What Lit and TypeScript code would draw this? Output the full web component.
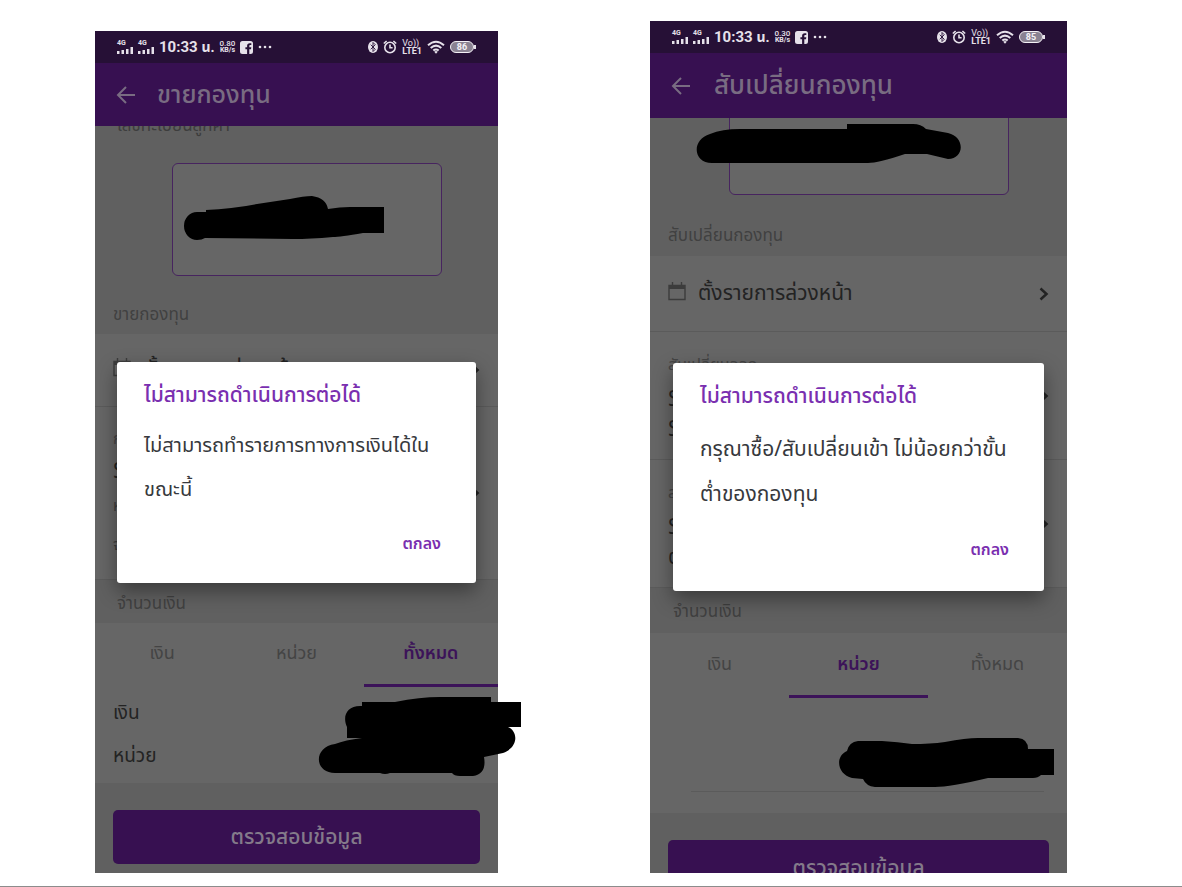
import { LitElement, html, css, svg, nothing } from "lit";
import { customElement, property } from "lit/decorators.js";
import { classMap } from "lit/directives/class-map.js";

interface Line {
  text: string;
  kind: "label" | "value" | "note";
}

interface Row {
  schedule?: boolean;
  lines: Line[];
}

interface Screen {
  id: string;
  title: string;
  speed: string;
  battery: string;
  clippedLabel?: string;
  rows: Row[];
  activeTab: string;
  totals: string[];
  message: string;
  viewBox: string;
  strokes: string[];
}

const TABS = ["เงิน", "หน่วย", "ทั้งหมด"];

const SELL: Screen = {
  id: "sell",
  title: "ขายกองทุน",
  speed: "0.80",
  battery: "86",
  clippedLabel: "เลขทะเบียนลูกค้า",
  rows: [
    { schedule: true, lines: [{ text: "ตั้งรายการล่วงหน้า", kind: "value" }] },
    {
      lines: [
        { text: "ก", kind: "label" },
        { text: "S", kind: "value" },
        { text: "ห", kind: "note" },
        { text: "จ", kind: "note" },
      ],
    },
  ],
  activeTab: "ทั้งหมด",
  totals: ["เงิน", "หน่วย"],
  message: "ไม่สามารถทำรายการทางการเงินได้ใน\nขณะนี้",
  viewBox: "95 31 403 842",
  strokes: [
    "M206 212V210Q232 209 257 204L290 199Q304 196 312 196Q326 198 328 209Q340 207 350 207H384V233H363Q340 237 333 237Q310 239 293 239L205 238Q202 240 197 240A13 14 0 0 1 197 212Z",
    "M362 702H395Q420 697 440 697H491V702H521V727H508C518 731 519 747 503 753L484 757Q487 774 473 776H460Q454 776 452 773H390Q385 775 380 773H335C314 773 313 747 335 744Q345 740 362 738H347V727C342 716 347 705 362 706Z",
  ],
};

const SWITCH: Screen = {
  id: "switch",
  title: "สับเปลี่ยนกองทุน",
  speed: "0.30",
  battery: "85",
  rows: [
    { schedule: true, lines: [{ text: "ตั้งรายการล่วงหน้า", kind: "value" }] },
    {
      lines: [
        { text: "สับเปลี่ยนออก", kind: "label" },
        { text: "S", kind: "value" },
        { text: "S", kind: "value" },
      ],
    },
    {
      lines: [
        { text: "ส", kind: "label" },
        { text: "S", kind: "value" },
        { text: "ต", kind: "value" },
      ],
    },
  ],
  activeTab: "หน่วย",
  totals: [],
  message: "กรุณาซื้อ/สับเปลี่ยนเข้า ไม่น้อยกว่าขั้น\nต่ำของกองทุน",
  viewBox: "650 21 417 852",
  strokes: [
    "M740 129H847V124H913Q921 124 926 129L948 133C965 137 965 158 948 159L927 154H905Q878 163 868 163H712C693 163 691 140 710 134Q722 129 740 129Z",
    "M858 741H882Q898 742 912 744Q930 744 945 742Q966 738 978 738H1018Q1028 739 1028 749H1054V775H1041Q1038 778 1033 778H988Q950 787 935 787H875Q866 786 863 779L852 778C838 775 834 757 847 751Q849 742 858 741Z",
  ],
};

@customElement("status-bar")
class StatusBar extends LitElement {
  @property() speed = "";
  @property() battery = "";

  static styles = css`
    :host {
      display: flex;
      align-items: center;
      justify-content: space-between;
      height: 32px;
      padding: 0 22px;
      background: #261036;
      color: #e6e1ea;
      font-family: Roboto, "Noto Sans Thai", sans-serif;
    }
    .group {
      display: flex;
      align-items: center;
      gap: 5px;
    }
    svg {
      display: block;
      fill: currentColor;
      flex: none;
    }
    .cell {
      display: grid;
      font-size: 7px;
      line-height: 6px;
      font-weight: 700;
    }
    .time {
      font-size: 15px;
      font-weight: 700;
      white-space: nowrap;
    }
    .thai {
      font-size: 14px;
    }
    .tiny {
      font-size: 8px;
      line-height: 7px;
      font-weight: 500;
      text-align: center;
    }
    .unit {
      display: block;
      font-size: 7px;
      font-weight: 700;
    }
    .lte {
      font-size: 9px;
      line-height: 8px;
    }
    .lte b {
      display: block;
    }
    .battery {
      box-sizing: border-box;
      width: 24px;
      height: 12px;
      border: 1px solid currentColor;
      border-radius: 6px;
      background: #8a8292;
      font-size: 9px;
      line-height: 10px;
      font-weight: 700;
      text-align: center;
      color: #f4f1f6;
    }
    .power {
      display: flex;
      align-items: center;
    }
    .power::after {
      content: "";
      width: 2px;
      height: 4px;
      background: currentColor;
    }
  `;

  render() {
    const bars = html`<span class="cell">4G
      <svg width="16" height="8" viewBox="0 0 16 8">
        <path d="M0 5h2.500v3H0zM4.500 4H7v4H4.500zM9 3h2.500v5H9zM13.500 1H16v7h-2.500z" />
      </svg></span>`;
    return html`
      <div class="group">
        ${bars}${bars}
        <span class="time">10:33 <span class="thai">น.</span></span>
        <span class="tiny">${this.speed}<span class="unit">KB/s</span></span>
        <svg width="13" height="13" viewBox="0 0 13 13">
          <path fill-rule="evenodd" d="M2.500 0h8A2.500 2.500 0 0 1 13 2.500v8a2.500 2.500 0 0 1-2.500 2.500H9.300V8.200h1.700l.3-2H9.300V5c0-.7.3-1 1-1h1V2.200H9.800C8 2.200 7.100 3.200 7.100 4.800v1.400H5.400v2h1.700V13H2.500A2.500 2.500 0 0 1 0 10.500v-8A2.500 2.500 0 0 1 2.500 0z" />
        </svg>
        <svg width="14" height="4" viewBox="0 0 14 4">
          <circle cx="2" cy="2" r="1.300" /><circle cx="7" cy="2" r="1.300" /><circle cx="12" cy="2" r="1.300" />
        </svg>
      </div>
      <div class="group">
        <svg width="10" height="14" viewBox="0 0 11 14">
          <ellipse cx="5.500" cy="7" rx="5.500" ry="6.700" />
          <path d="M3 4.500l5 5L5.500 12V2L8 4.500l-5 5" fill="none" stroke="#261036" />
        </svg>
        <svg width="14" height="14" viewBox="0 0 14 14">
          <g fill="none" stroke="currentColor" stroke-width="1.600">
            <circle cx="7" cy="7.500" r="5.200" />
            <path d="M7 4.500v3.300h2.600M.8 3.500L3.600 1M13.200 3.500L10.400 1" />
          </g>
        </svg>
        <span class="lte">Vo))<b>LTE1</b></span>
        <svg width="18" height="14" viewBox="0 0 18 14">
          <path d="M1 5.200Q9-1.800 17 5.200M3.700 8Q9 3.300 14.300 8M6.300 10.600Q9 8.300 11.700 10.600" fill="none" stroke="currentColor" stroke-width="2" />
          <path d="M7.200 11.800Q9 10.400 10.800 11.800L9 13.800z" />
        </svg>
        <span class="power"><span class="battery">${this.battery}</span></span>
      </div>
    `;
  }
}

@customElement("fund-screen")
class FundScreen extends LitElement {
  @property({ attribute: false }) screen!: Screen;

  static styles = css`
    :host {
      display: flex;
      flex-direction: column;
      position: relative;
      min-width: 0;
      min-height: 0;
      color: #232323;
    }
    .bar {
      flex: none;
      display: flex;
      align-items: center;
      gap: 20px;
      height: 63px;
      padding: 0 20px;
      background: #371051;
      color: #796c82;
    }
    .bar.switch {
      gap: 22px;
      height: 65px;
    }
    button {
      font: inherit;
      color: inherit;
      border: 0;
      padding: 0;
      background: none;
    }
    svg {
      display: block;
      flex: none;
    }
    h1,
    h2,
    h3,
    p {
      margin: 0;
      font-weight: 400;
    }
    h1 {
      font-size: 25px;
      line-height: 40px;
      font-weight: 500;
      white-space: nowrap;
    }
    .switch h1 {
      font-size: 26px;
    }
    .body {
      flex: 1;
      min-height: 0;
      overflow: hidden;
      background: #606060;
    }
    .account {
      display: flow-root;
    }
    .clipped {
      margin-top: -14px;
      padding-left: 22px;
      font-size: 17px;
      line-height: 28px;
      color: #3d3d3d;
    }
    .card {
      box-sizing: border-box;
      width: 67%;
      height: 113px;
      margin: 23px auto 0 19%;
      border: 1px solid #47245f;
      border-radius: 6px;
      background: #666;
    }
    .switch .card {
      height: 118px;
      margin-top: -41px;
    }
    .section {
      padding: 24px 18px 4px;
      font-size: 17px;
      line-height: 30px;
      color: #414141;
    }
    .switch .section {
      padding: 26px 18px 5px;
    }
    .row {
      box-sizing: border-box;
      display: flex;
      align-items: center;
      justify-content: space-between;
      min-height: 73px;
      padding: 0 16px 0 18px;
      background: #666;
      border-bottom: 1px solid #5b5b5b;
    }
    .switch .row {
      min-height: 76px;
    }
    .lines {
      padding: 14px 0;
    }
    .label {
      font-size: 16px;
      line-height: 36px;
      color: #444;
    }
    .value {
      font-size: 21px;
      line-height: 30px;
    }
    .note {
      font-size: 15px;
      line-height: 39px;
      color: #3d3d3d;
    }
    .switch .label {
      line-height: 39px;
    }
    .schedule {
      display: flex;
      align-items: center;
      gap: 12px;
    }
    .section.amount {
      padding: 9px 22px 4px;
    }
    .switch .section.amount {
      padding: 9px 23px 6px;
    }
    .tabs {
      display: grid;
      grid-template-columns: repeat(3, 1fr);
      background: #666;
    }
    .tab {
      height: 64px;
      border-bottom: 3px solid transparent;
      font-size: 18px;
      color: #444;
    }
    .switch .tab {
      height: 65px;
    }
    .tab.active {
      color: #3c1359;
      border-color: #3c1359;
      font-weight: 600;
    }
    .details {
      background: #666;
    }
    .totals {
      margin: 0;
      padding: 5px 18px 5px;
      font-size: 19px;
      line-height: 43px;
    }
    .entry {
      display: flow-root;
      padding: 0 23px 21px 41px;
    }
    input {
      box-sizing: border-box;
      display: block;
      width: 100%;
      height: 94px;
      border: 0;
      border-bottom: 1px solid #5b5b5b;
      background: none;
      font: inherit;
    }
    .submit {
      display: block;
      width: calc(100% - 36px);
      margin: 27px 18px;
      height: 54px;
      border-radius: 5px;
      background: #371051;
      color: #847a8a;
      font-size: 21px;
      font-weight: 500;
    }
    .switch .submit {
      height: 56px;
    }
    .dialog {
      box-sizing: border-box;
      position: absolute;
      top: 331px;
      left: 22px;
      right: 22px;
      padding: 12px 35px 17px 27px;
      background: #fff;
      border-radius: 3px;
      box-shadow: 0 8px 20px rgba(0, 0, 0, 0.4);
      color: #37393d;
    }
    .switch .dialog {
      top: 342px;
      left: 23px;
      right: 23px;
      padding-bottom: 19px;
    }
    h2 {
      font-size: 21px;
      line-height: 44px;
      font-weight: 500;
      color: #7a2fb0;
    }
    .message {
      padding-top: 6px;
      font-size: 20px;
      line-height: 44px;
      white-space: pre;
    }
    .switch .message {
      padding-top: 8px;
      font-size: 21px;
      line-height: 45px;
    }
    .actions {
      display: flex;
      justify-content: flex-end;
      padding-top: 10px;
      font-size: 16px;
      line-height: 44px;
      font-weight: 600;
      color: #7a2fb0;
    }
    .switch .actions {
      padding-top: 11px;
    }
    .ink {
      position: absolute;
      top: 0;
      left: 0;
      width: 100%;
      height: auto;
      overflow: visible;
      pointer-events: none;
    }
  `;

  private row(row: Row) {
    const chevron = html`<svg width="14" height="16" viewBox="0 0 14 16">
      <path d="M3.500 2.500L9.500 8l-6 5.500" fill="none" stroke="#232323" stroke-width="2.500" />
    </svg>`;
    if (row.schedule) {
      return html`<div class="row">
        <div class="schedule">
          <svg width="18" height="24" viewBox="0 0 18 24">
            <path d="M1 3.500h16v14H1zM4.500 0v4M13.500 0v4" fill="none" stroke="#3c3c3c" stroke-width="1.400" />
            <path d="M1 3.500h16v3.500H1z" fill="#3c3c3c" />
          </svg>
          <span class="value">${row.lines[0].text}</span>
        </div>
        ${chevron}
      </div>`;
    }
    return html`<div class="row">
      <div class="lines">
        ${row.lines.map((l) => html`<div class=${l.kind}>${l.text}</div>`)}
      </div>
      ${chevron}
    </div>`;
  }

  render() {
    const s = this.screen;
    return html`
      <status-bar speed=${s.speed} battery=${s.battery}></status-bar>
      <div class=${"bar " + s.id}>
        <button aria-label="ย้อนกลับ">
          <svg width="22" height="22" viewBox="0 0 22 22">
            <path d="M20 11H3M11 3L3 11l8 8" fill="none" stroke="currentColor" stroke-width="2" />
          </svg>
        </button>
        <h1>${s.title}</h1>
      </div>
      <div class=${"body " + s.id}>
        <div class="account">
          ${s.clippedLabel ? html`<div class="clipped">${s.clippedLabel}</div>` : nothing}
          <div class="card"></div>
        </div>
        <h3 class="section">${s.title}</h3>
        ${s.rows.map((r) => this.row(r))}
        <h3 class="section amount">จำนวนเงิน</h3>
        <div class="tabs" role="tablist">
          ${TABS.map(
            (t) => html`<button
              role="tab"
              aria-selected=${t === s.activeTab}
              class=${classMap({ tab: true, active: t === s.activeTab })}
            >${t}</button>`
          )}
        </div>
        <div class="details">
          ${s.totals.length
            ? html`<div class="totals">${s.totals.map((t) => html`<div>${t}</div>`)}</div>`
            : html`<div class="entry"><input type="text" aria-label=${s.activeTab} /></div>`}
        </div>
        <button class="submit">ตรวจสอบข้อมูล</button>
      </div>
      <div class=${s.id}>
        <section class="dialog" role="alertdialog" aria-labelledby="dialog-title">
          <h2 id="dialog-title">ไม่สามารถดำเนินการต่อได้</h2>
          <p class="message">${s.message}</p>
          <div class="actions"><button>ตกลง</button></div>
        </section>
      </div>
      <svg class="ink" viewBox=${s.viewBox} aria-hidden="true">
        ${s.strokes.map((d) => svg`<path d=${d} fill="#000"/>`)}
      </svg>
    `;
  }
}

@customElement("app-root")
class AppRoot extends LitElement {
  static styles = css`
    :host {
      box-sizing: border-box;
      display: grid;
      grid-template-columns: 403fr 417fr;
      grid-template-rows: minmax(0, 1fr);
      column-gap: 152px;
      height: 100vh;
      padding: 21px 115px 13px 95px;
      border-bottom: 1px solid #8c8c8c;
      background: #fff;
      font-family: "Noto Sans Thai", "Sarabun", "Loma", "Noto Sans", sans-serif;
    }
    .first {
      margin-top: 10px;
    }
  `;

  render() {
    return html`
      <fund-screen class="first" .screen=${SELL}></fund-screen>
      <fund-screen .screen=${SWITCH}></fund-screen>
    `;
  }
}
